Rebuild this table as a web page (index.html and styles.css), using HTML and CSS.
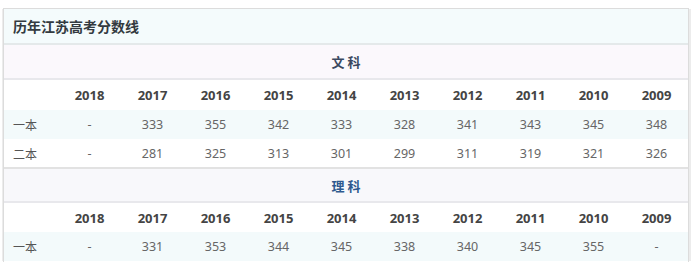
FILE: index.html
```html
<!DOCTYPE html>
<html lang="zh">
<head>
<meta charset="utf-8">
<link rel="stylesheet" href="styles.css">
</head>
<body>
<div class="frame">
  <div class="title">历年江苏高考分数线</div>
  <table class="scores">
    <colgroup><col class="c-label"><col span="10" class="c-year"></colgroup>
    <tr class="sect"><td colspan="11">文 科</td></tr>
    <tr class="years"><td></td><td>2018</td><td>2017</td><td>2016</td><td>2015</td><td>2014</td><td>2013</td><td>2012</td><td>2011</td><td>2010</td><td>2009</td></tr>
    <tr class="row hl"><td class="lab">一本</td><td>-</td><td>333</td><td>355</td><td>342</td><td>333</td><td>328</td><td>341</td><td>343</td><td>345</td><td>348</td></tr>
    <tr class="row last"><td class="lab">二本</td><td>-</td><td>281</td><td>325</td><td>313</td><td>301</td><td>299</td><td>311</td><td>319</td><td>321</td><td>326</td></tr>
    <tr class="sect sect2"><td colspan="11">理 科</td></tr>
    <tr class="years y2"><td></td><td>2018</td><td>2017</td><td>2016</td><td>2015</td><td>2014</td><td>2013</td><td>2012</td><td>2011</td><td>2010</td><td>2009</td></tr>
    <tr class="row hl"><td class="lab">一本</td><td>-</td><td>331</td><td>353</td><td>344</td><td>345</td><td>338</td><td>340</td><td>345</td><td>355</td><td>-</td></tr>
  </table>
</div>
</body>
</html>
```
FILE: styles.css
```css
html, body {
  margin: 0;
  padding: 0;
  background: #ffffff;
  overflow: hidden;
}
body {
  font-family: "Noto Sans", "Noto Sans CJK SC", sans-serif;
  height: 262px;
}
.frame {
  margin: 8px 0 0 3px;
  width: 684px;
  border: 1px solid #dcdcdc;
  border-bottom: none;
  box-shadow: 3px 0 0 -1px #ececec, -2px 0 0 -1px #ececec;
  height: 253px;
  overflow: hidden;
}
.title {
  height: 34px;
  line-height: 34px;
  padding-left: 9px;
  background: #f4fbfc;
  border-bottom: 2px solid #e4e9ea;
  font-family: "Noto Sans CJK SC", sans-serif;
  font-weight: 700;
  font-size: 14px;
  color: #333a40;
}
.scores {
  width: 684px;
  border-collapse: collapse;
  table-layout: fixed;
}
.c-label { width: 54px; }
.c-year { width: 63px; }
.scores td {
  padding: 0;
  text-align: center;
  font-size: 12.5px;
  color: #666;
}
.sect td {
  height: 33px;
  background: #fbf8fc;
  border-bottom: 2px solid #e8e8ec;
  font-family: "Noto Sans CJK SC", sans-serif;
  font-weight: 700;
  font-size: 13px;
  color: #3a4860;
}
.sect2 td {
  background: #f8f8fb;
  color: #2f5a8f;
  height: 32px;
  border-top: 2px solid #f2f2f4;
}
.years td {
  height: 30px;
  font-weight: 700;
  color: #444;
  font-size: 13px;
  background: #fff;
}
.y2 td { height: 29px; }
.row td { height: 29px; }
.row.hl td { background: #f3fafb; }
.row.last td { border-bottom: 2px solid #e2e2e2; height: 28px; }
.row td.lab {
  text-align: left;
  padding-left: 9px;
  font-family: "Noto Sans CJK SC", sans-serif;
  font-size: 12px;
  color: #555;
}
```
